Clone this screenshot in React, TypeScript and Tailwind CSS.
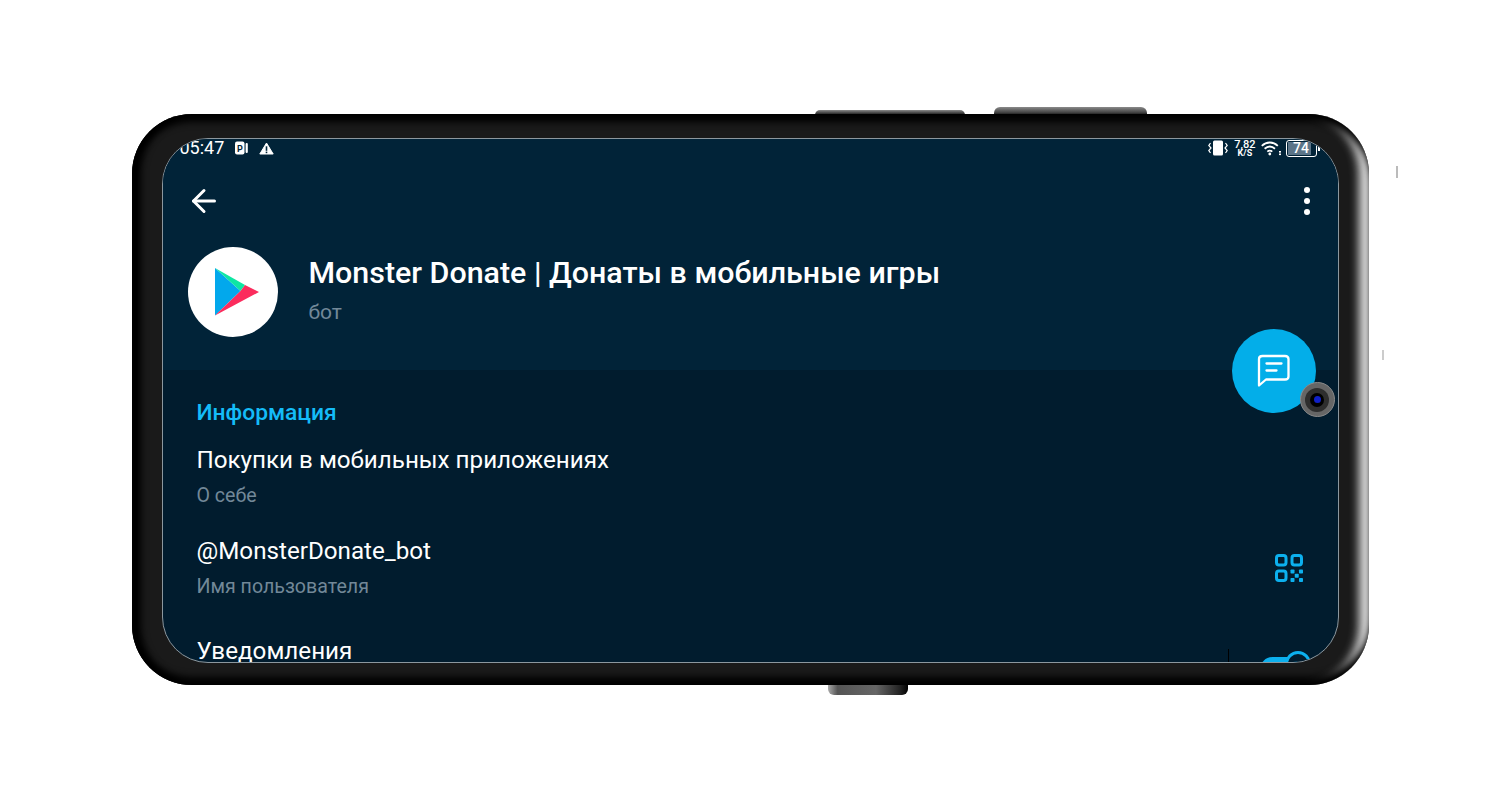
import React from "react";
import { ArrowLeft } from "lucide-react";

function PlayLogo() {
  return (
    <svg width="44" height="48" viewBox="215 268 44 48">
      <polygon points="215,268 240.5,291 215,315.5" fill="#02a8ec" />
      <polygon points="215,268 245,285 240.5,291" fill="#0ee6a3" />
      <polygon points="245,285 259,292 215,315.5 240.5,291" fill="#fb2c5d" />
    </svg>
  );
}

function QrIcon() {
  return (
    <svg width="28" height="28" viewBox="0 0 28 28" fill="none" stroke="#0cb0ee" strokeWidth="3">
      <rect x="1.5" y="1.5" width="9.5" height="9.5" rx="2.4" />
      <rect x="17" y="1.5" width="9.5" height="9.5" rx="2.4" />
      <rect x="1.5" y="17" width="9.5" height="9.5" rx="2.4" />
      <g fill="#0cb0ee" stroke="none">
        <rect x="15.5" y="15.5" width="4" height="4" rx="0.8" />
        <rect x="24" y="15.5" width="4" height="4" rx="0.8" />
        <rect x="19.75" y="19.75" width="4" height="4" rx="0.8" />
        <rect x="15.5" y="24" width="4" height="4" rx="0.8" />
        <rect x="24" y="24" width="4" height="4" rx="0.8" />
      </g>
    </svg>
  );
}

function ChatIcon() {
  return (
    <svg width="34" height="34" viewBox="0 0 34 34" fill="none" stroke="#fff" strokeWidth="2.3" strokeLinecap="round" strokeLinejoin="round">
      <path d="M5.5 2 C3 2 2 3 2 5 V31.5 L9 25.5 H28 C30.5 25.5 31.5 24.5 31.5 22.5 V5 C31.5 3 30.5 2 28 2 Z" />
      <path d="M9.5 9.5 H24.5 M9.5 16.5 H19.5" />
    </svg>
  );
}

function PortraitIcon() {
  return (
    <svg width="13" height="14" viewBox="0 0 13 14">
      <rect x="0" y="0.5" width="9.5" height="13" rx="2" fill="#fff" />
      <rect x="10.6" y="2" width="2.2" height="10" rx="1" fill="#fff" />
      <text x="2" y="10.5" fontSize="9" fontWeight="700" fontFamily="Roboto" fill="#012338">P</text>
    </svg>
  );
}

function WarnIcon() {
  return (
    <svg width="15" height="13" viewBox="0 0 15 13">
      <path d="M7.5 1 L14.2 12 H0.8 Z" fill="#fff" stroke="#fff" strokeWidth="1" strokeLinejoin="round" />
      <rect x="6.7" y="4.3" width="1.6" height="4.5" fill="#012338" />
      <rect x="6.7" y="9.6" width="1.6" height="1.6" fill="#012338" />
    </svg>
  );
}

function VibrateIcon() {
  return (
    <svg width="20" height="16" viewBox="0 0 20 16" fill="none" stroke="#fff" strokeWidth="1.2">
      <rect x="5" y="0.5" width="10" height="15" rx="1.5" fill="#fff" stroke="none" />
      <path d="M2.5 3 L0.8 5.5 L3 8 L0.8 10.5 L2.5 13" />
      <path d="M17.5 3 L19.2 5.5 L17 8 L19.2 10.5 L17.5 13" />
    </svg>
  );
}

function WifiIcon() {
  return (
    <svg width="20" height="15" viewBox="0 0 20 15" fill="none" stroke="#fff" strokeWidth="1.8">
      <path d="M0.8 4.8 C5.5 0.4 12 0.4 16.8 4.8" />
      <path d="M3.6 7.8 C6.8 5 10.8 5 14 7.8" />
      <path d="M6.3 10.6 C7.9 9.3 9.7 9.3 11.3 10.6" />
      <circle cx="8.8" cy="13" r="1.4" fill="#fff" stroke="none" />
      <rect x="18" y="10" width="2" height="1.6" fill="#fff" stroke="none" />
      <rect x="18" y="12.5" width="2" height="1.6" fill="#fff" stroke="none" />
    </svg>
  );
}

function InfoRow({ title, sub, className }: { title: string; sub: string; className?: string }) {
  return (
    <div className={className}>
      <div className="text-[24.2px] leading-[30px] text-white">{title}</div>
      <div className="mt-[10px] text-[19.6px] leading-[22px] text-[#728898]">{sub}</div>
    </div>
  );
}

export default function App() {
  return (
    <div className="relative flex h-[800px] w-[1500px] items-center justify-center overflow-hidden bg-white font-['Roboto',sans-serif]">
      <div className="relative mb-[1px] h-[571px] w-[1237px]">
        {/* side buttons */}
        <div className="absolute left-[683px] top-[-4px] h-[6px] w-[150px] rounded-t-[5px] bg-[linear-gradient(to_bottom,#8a8a8a,#333_60%,#000)]" />
        <div className="absolute left-[862px] top-[-7px] h-[9px] w-[153px] rounded-t-[6px] bg-[linear-gradient(to_bottom,#8a8a8a,#444_60%,#000)]" />
        <div className="absolute bottom-[-10px] left-[696px] h-[12px] w-[80px] rounded-b-[6px] bg-[linear-gradient(to_right,#aaa,#555_12%,#666_60%,#222_90%,#000)]" />

        {/* phone frame */}
        <div className="relative flex h-full w-full items-stretch rounded-[60px] bg-[#1a1a1a] pb-[22px] pl-[30px] pr-[30px] pt-[24px] shadow-[inset_0_11px_7px_-3px_#000,inset_0_-11px_7px_-3px_#000,inset_13px_0_7px_-4px_#000,inset_-14px_0_10px_-4px_#ddd]">
          {/* screen */}
          <div className="relative flex-1 overflow-hidden rounded-[46px] border border-[#8c979e] bg-[#011c2e]">
            {/* header */}
            <div className="relative h-[231px] bg-[#012338]">
              <div className="flex h-[18px] items-center justify-between pl-[17px] pr-[18px] text-white">
                <div className="flex items-center">
                  <span className="text-[18px] leading-[18px]">05:47</span>
                  <span className="ml-[11px] flex"><PortraitIcon /></span>
                  <span className="ml-[11px] flex"><WarnIcon /></span>
                </div>
                <div className="flex items-center">
                  <VibrateIcon />
                  <div className="ml-[6px] mt-[2px] flex flex-col items-center text-[11px] font-medium leading-[9px]">
                    <span>7,82</span>
                    <span className="text-[9px] font-bold">K/S</span>
                  </div>
                  <span className="ml-[5px] flex"><WifiIcon /></span>
                  <div className="relative ml-[5px] flex h-[17px] w-[31px] items-center overflow-hidden rounded-[3px] border border-white">
                    <div className="absolute inset-y-[1px] left-[1px] w-[23px] bg-[#5b7488]" />
                    <span className="relative w-full text-center text-[14px] font-medium leading-none">74</span>
                  </div>
                  <span className="ml-[1px] h-[6px] w-[2px] bg-white" />
                </div>
              </div>

              <div className="flex items-center justify-between pl-[23px] pr-[28px] pt-[26px]">
                <ArrowLeft className="h-[36px] w-[36px] text-white" strokeWidth={2} />
                <div className="flex flex-col gap-[5px]">
                  <span className="h-[6px] w-[6px] rounded-full bg-white" />
                  <span className="h-[6px] w-[6px] rounded-full bg-white" />
                  <span className="h-[6px] w-[6px] rounded-full bg-white" />
                </div>
              </div>

              <div className="flex items-center pl-[25px] pt-[28px]">
                <div className="flex h-[90px] w-[90px] shrink-0 items-center justify-center rounded-full bg-white">
                  <span className="ml-[9px] flex"><PlayLogo /></span>
                </div>
                <div className="ml-[31px] pb-[5px]">
                  <div className="text-[30.4px] font-medium leading-[36px] text-white">Monster Donate | Донаты в мобильные игры</div>
                  <div className="mt-[9px] text-[21px] leading-[24px] text-[#728898]">бот</div>
                </div>
              </div>
            </div>

            {/* body */}
            <div className="pl-[34px] pt-[30px]">
              <div className="text-[22.8px] font-medium leading-[26px] text-[#14bcf8]">Информация</div>
              <InfoRow className="mt-[19px]" title="Покупки в мобильных приложениях" sub="О себе" />
              <InfoRow className="mt-[29px]" title="@MonsterDonate_bot" sub="Имя пользователя" />
              <div className="mt-[38px] text-[24.2px] leading-[30px] text-white">Уведомления</div>
            </div>

            <div className="absolute left-[1112px] top-[415px]"><QrIcon /></div>
            <div className="absolute bottom-0 left-[1065px] h-[13px] w-px bg-black" />
            <div className="absolute bottom-[-20px] left-[1097px] h-[25px] w-[40px] rounded-full bg-[#0cb0ee]" />
            <div className="absolute bottom-[-17px] left-[1122px] h-[28px] w-[26px] rounded-full border-[3px] border-[#0cb0ee] bg-[#011c2e]" />

            {/* action button */}
            <div className="absolute left-[1069px] top-[190px] flex h-[84px] w-[84px] items-center justify-center rounded-full bg-[#03aee9]">
              <ChatIcon />
            </div>
          </div>
        </div>

        {/* camera */}
        <div className="absolute left-[1168px] top-[268px] flex h-[35px] w-[35px] items-center justify-center rounded-full border border-[#8a8a8a] bg-[#666]">
          <div className="flex h-[24px] w-[24px] items-center justify-center rounded-full bg-[#2e2e2e]">
            <div className="flex h-[14px] w-[14px] items-center justify-center rounded-full bg-black">
              <div className="h-[7px] w-[7px] rounded-full bg-[#1020c8]" />
            </div>
          </div>
        </div>

        {/* faint edge marks */}
        <div className="absolute left-[1264px] top-[52px] h-[12px] w-[2px] bg-[#bbb]" />
        <div className="absolute left-[1250px] top-[236px] h-[10px] w-[2px] bg-[#ccc]" />
      </div>
    </div>
  );
}
